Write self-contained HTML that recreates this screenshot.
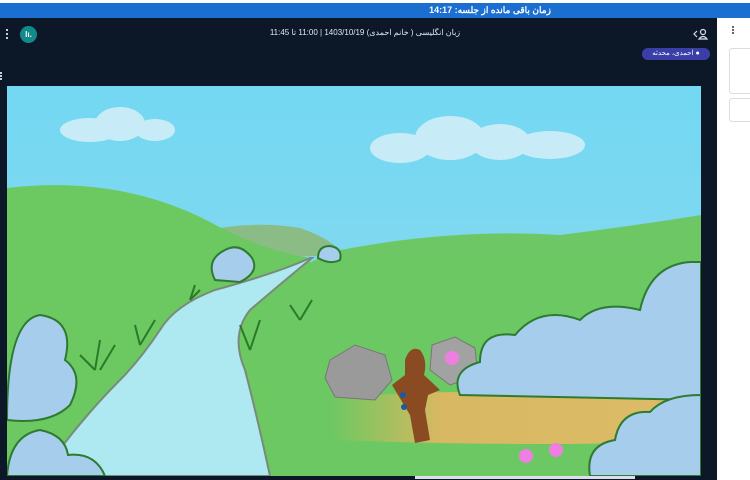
<!DOCTYPE html>
<html><head><meta charset="utf-8"><style>
*{margin:0;padding:0;box-sizing:border-box}
body{width:750px;height:480px;overflow:hidden;background:#fff;position:relative;font-family:"Liberation Sans","Noto Sans CJK SC",sans-serif}
.top{position:absolute;left:0;top:3px;width:750px;height:15px;background:#1a6fd0;color:#fff;font-size:9px;font-weight:bold;text-align:center;line-height:15px;padding-left:230px}
.dark{position:absolute;left:0;top:18px;width:717px;height:462px;background:#0c1828}
.right{position:absolute;left:717px;top:18px;width:33px;height:462px;background:#fff}
.title{position:absolute;left:200px;width:330px;top:28px;color:#dfe6ee;font-size:8px;text-align:center}
.badge{position:absolute;left:642px;top:48px;width:68px;height:12px;border-radius:6px;background:#3a3fa8;color:#fff;font-size:7px;line-height:12px;text-align:center;direction:rtl}
</style></head><body>
<div class="top">زمان باقی مانده از جلسه: 14:17</div>
<div class="dark"></div>
<div class="right">
 <div style="position:absolute;left:15px;top:8px;width:2px;height:8px;border-left:2px dotted #666"></div>
 <div style="position:absolute;left:12px;top:30px;width:25px;height:46px;border:1px solid #ddd;border-radius:3px"></div>
 <div style="position:absolute;left:12px;top:80px;width:25px;height:24px;border:1px solid #ddd;border-radius:3px"></div>
</div>
<div style="position:absolute;left:6px;top:29px;width:2px;height:10px;border-left:2px dotted #ccd"></div>
<div style="position:absolute;left:20px;top:26px;width:17px;height:17px;border-radius:50%;background:#138a8a;color:#fff;font-size:8px;font-weight:bold;text-align:center;line-height:17px">lı.</div>
<div class="title">زبان انگلیسی ( خانم احمدی) 1403/10/19 | 11:00 تا 11:45</div>
<svg style="position:absolute;left:693px;top:27px" width="16" height="14" viewBox="0 0 16 14"><path d="M4 4 L1 7 L4 10" stroke="#dde" fill="none" stroke-width="1.2"/><circle cx="10" cy="5" r="2.5" stroke="#dde" fill="none" stroke-width="1.2"/><path d="M6 12 Q10 7 14 12 Z" stroke="#dde" fill="none" stroke-width="1.2"/></svg>
<div class="badge">● احمدی، محدثه</div>
<div style="position:absolute;left:0;top:72px;width:2px;height:8px;border-left:2px dotted #ccd"></div>
<svg style="position:absolute;left:0;top:0" width="750" height="480" viewBox="0 0 750 480">
<defs><linearGradient id="sky" x1="0" y1="0" x2="0" y2="1"><stop offset="0" stop-color="#73d8f2"/><stop offset="1" stop-color="#8fd9ee"/></linearGradient>
<linearGradient id="path" x1="0" y1="0" x2="1" y2="0"><stop offset="0" stop-color="#d6b85a" stop-opacity="0"/><stop offset=".3" stop-color="#d8b862"/><stop offset="1" stop-color="#dcbc66"/></linearGradient>
<clipPath id="c"><rect x="7" y="86" width="694" height="390"/></clipPath></defs>
<g clip-path="url(#c)">
<rect x="7" y="86" width="694" height="390" fill="url(#sky)"/>
<g fill="#c8ecf7">
<ellipse cx="90" cy="130" rx="30" ry="12"/><ellipse cx="120" cy="124" rx="25" ry="17"/><ellipse cx="155" cy="130" rx="20" ry="11"/>
<ellipse cx="400" cy="148" rx="30" ry="15"/><ellipse cx="450" cy="138" rx="35" ry="22"/><ellipse cx="500" cy="142" rx="30" ry="18"/><ellipse cx="550" cy="145" rx="35" ry="14"/></g>
<path d="M200 232 Q250 220 300 228 Q330 238 345 255 L200 260Z" fill="#8cbc86"/>
<path d="M330 252 Q450 228 560 235 Q640 225 701 215 L701 476 L330 476Z" fill="#6dc765"/>
<path d="M7 188 Q120 175 210 222 Q260 250 310 258 L300 476 L7 476Z" fill="#6cc860"/>
<path d="M320 258 Q300 265 260 300 Q250 330 280 476 L701 476 L701 260 Q550 250 320 258Z" fill="#6cc862"/>
<path d="M310 258 Q280 272 215 290 Q175 305 160 330 Q140 360 120 380 Q80 420 40 476 L270 476 Q258 420 245 370 Q230 335 250 310 Q285 280 312 258Z" fill="#aee9f2" stroke="#7a8a7a" stroke-width="2"/>
<path d="M330 398 Q500 385 700 398 L700 440 Q560 448 330 440Z" fill="url(#path)"/>
<path d="M330 360 L355 345 L385 355 L392 380 L375 400 L335 397 L325 378Z" fill="#9a9a9a" stroke="#777"/>
<path d="M432 345 L455 337 L475 348 L478 375 L450 385 L430 370Z" fill="#a2a2a2" stroke="#777"/>
<g fill="#a6cdec" stroke="#2d7a30" stroke-width="2">
<path d="M460 395 Q450 370 480 362 Q480 330 515 335 Q540 305 580 320 Q600 300 640 310 Q650 265 690 262 L701 262 L701 400 Z"/>
<path d="M590 476 Q585 445 615 440 Q620 410 650 412 Q665 395 701 395 L701 476Z"/>
<path d="M7 420 Q7 320 40 315 Q75 320 65 360 Q85 375 70 405 Q50 425 7 420Z"/>
<path d="M7 476 Q10 435 40 430 Q65 435 68 455 Q95 452 105 476Z"/>
<path d="M215 280 Q205 260 225 250 Q240 242 252 258 Q260 272 240 282Z"/>
<path d="M318 258 Q318 246 330 246 Q343 248 340 260 Q330 265 318 258Z"/>
</g>
<g stroke="#2a7a2a" stroke-width="2" fill="none">
<path d="M95 370 L100 340 M100 370 L115 345 M95 370 L80 355"/>
<path d="M140 345 L135 325 M140 345 L155 320"/>
<path d="M250 350 L240 325 M250 350 L260 320"/>
<path d="M300 320 L290 305 M300 320 L312 300"/>
<path d="M190 300 L195 285 M190 300 L200 290"/>
</g>
<path d="M405 360 Q410 345 420 350 Q428 360 424 375 L440 390 L428 395 L425 410 L430 440 L415 443 L410 415 L398 395 L392 385 L405 375Z" fill="#8a4a22"/>
<circle cx="403" cy="395" r="3" fill="#1a5aa0"/><circle cx="404" cy="407" r="3" fill="#1a5aa0"/>
<g fill="#ee7fe0"><circle cx="452" cy="358" r="7"/><circle cx="526" cy="456" r="7"/><circle cx="556" cy="450" r="7"/></g>
</g>
<rect x="415" y="476" width="220" height="3" fill="#dde"/>
</svg>
</body></html>
